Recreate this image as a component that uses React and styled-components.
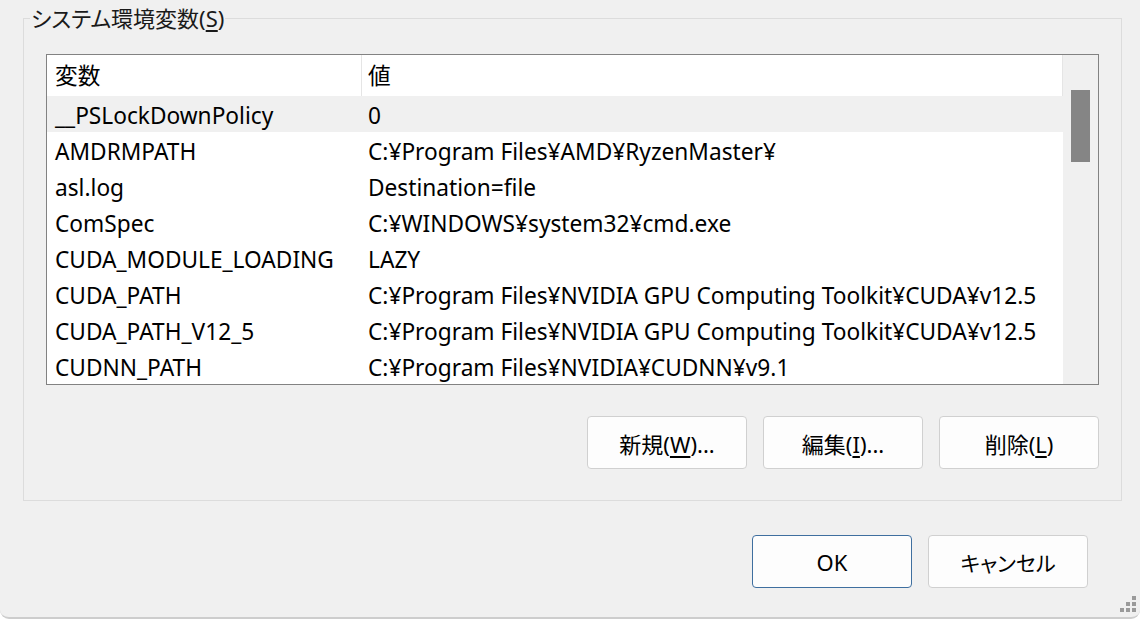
import React from 'react'
import styled, { createGlobalStyle } from 'styled-components'

const GlobalStyle = createGlobalStyle`
  html, body {
    margin: 0;
    padding: 0;
    background: #ffffff;
  }
  body {
    font-family: "Noto Sans", "Noto Sans CJK JP", sans-serif;
    color: #000;
  }
`

const variables = [
  { name: '__PSLockDownPolicy', value: '0', selected: true },
  { name: 'AMDRMPATH', value: 'C:¥Program Files¥AMD¥RyzenMaster¥' },
  { name: 'asl.log', value: 'Destination=file' },
  { name: 'ComSpec', value: 'C:¥WINDOWS¥system32¥cmd.exe' },
  { name: 'CUDA_MODULE_LOADING', value: 'LAZY' },
  { name: 'CUDA_PATH', value: 'C:¥Program Files¥NVIDIA GPU Computing Toolkit¥CUDA¥v12.5' },
  { name: 'CUDA_PATH_V12_5', value: 'C:¥Program Files¥NVIDIA GPU Computing Toolkit¥CUDA¥v12.5' },
  { name: 'CUDNN_PATH', value: 'C:¥Program Files¥NVIDIA¥CUDNN¥v9.1' },
]

const App = () => (
  <>
    <GlobalStyle />
    <Window>
      <Group>
        <Legend>システム環境変数(<U>S</U>)</Legend>
        <ListView>
          <ListBody>
            <HeaderRow>
              <HeaderCell>変数</HeaderCell>
              <HeaderCell>値</HeaderCell>
            </HeaderRow>
            {variables.map((v) => (
              <Row key={v.name} selected={v.selected}>
                <NameCell>{v.name}</NameCell>
                <ValueCell>{v.value}</ValueCell>
              </Row>
            ))}
          </ListBody>
          <ScrollTrack>
            <ScrollThumb />
          </ScrollTrack>
        </ListView>
        <ButtonRow>
          <Button>新規(<U>W</U>)...</Button>
          <Button>編集(<U>I</U>)...</Button>
          <Button>削除(<U>L</U>)</Button>
        </ButtonRow>
      </Group>
      <DialogButtons>
        <Button primary>OK</Button>
        <Button kana>キャンセル</Button>
      </DialogButtons>
      <Grip width="18" height="16" viewBox="0 0 18 16">
        <rect x="12" y="0" width="4" height="4" />
        <rect x="6" y="6" width="4" height="4" />
        <rect x="12" y="6" width="4" height="4" />
        <rect x="0" y="12" width="4" height="4" />
        <rect x="6" y="12" width="4" height="4" />
        <rect x="12" y="12" width="4" height="4" />
      </Grip>
    </Window>
  </>
)

export default App

const Window = styled.div`
  position: relative;
  box-sizing: border-box;
  width: 1140px;
  height: 619px;
  padding: 3px 18px 0 23px;
  background: #f0f0f0;
  border-bottom: 2px solid #cdcdcd;
  border-radius: 0 0 9px 9px;
  font-size: 22.7px;
`

const Group = styled.fieldset`
  margin: 0;
  padding: 21px 22px 31px 22px;
  border: 1px solid #dcdcdc;
  min-width: 0;
`

const Legend = styled.legend`
  margin-left: -16px;
  padding: 0 1px;
  line-height: 30px;
  font-size: 22px;
  font-feature-settings: "palt";
  color: #1a1a1a;
`

const U = styled.span`
  text-decoration: underline;
  text-underline-offset: 3px;
`

const ListView = styled.div`
  display: flex;
  height: 331px;
  box-sizing: border-box;
  border: 1px solid #828282;
  background: #ffffff;
  overflow: hidden;
`

const ListBody = styled.div`
  flex: 1;
  display: flex;
  flex-direction: column;
`

const HeaderRow = styled.div`
  display: grid;
  grid-template-columns: 314px 1fr;
  height: 41px;
  flex-shrink: 0;
  border-right: 1px solid #e5e5e5;
`

const HeaderCell = styled.div`
  display: flex;
  align-items: center;
  padding-left: 8px;
  padding-bottom: 2px;
  & + & {
    border-left: 1px solid #e5e5e5;
    padding-left: 6px;
  }
`

const Row = styled.div`
  display: grid;
  grid-template-columns: 314px 1fr;
  height: 36px;
  flex-shrink: 0;
  align-items: center;
  background: ${(p) => (p.selected ? '#f0f0f0' : 'transparent')};
  white-space: nowrap;
`

const NameCell = styled.div`
  padding-left: 8px;
  padding-top: 2px;
`

const ValueCell = styled.div`
  padding-left: 7px;
  padding-top: 2px;
`

const ScrollTrack = styled.div`
  width: 35px;
  flex-shrink: 0;
  background: #f0f0f0;
  padding: 35px 0 0 8px;
  box-sizing: border-box;
`

const ScrollThumb = styled.div`
  width: 19px;
  height: 72px;
  background: #858585;
`

const ButtonRow = styled.div`
  display: flex;
  justify-content: flex-end;
  gap: 16px;
  margin-top: 31px;
`

const Button = styled.button`
  width: 160px;
  height: 53px;
  box-sizing: border-box;
  border: 1px solid ${(p) => (p.primary ? '#3f6f9f' : '#d0d0d0')};
  border-radius: 4px;
  background: #fdfdfd;
  font-family: inherit;
  font-size: ${(p) => (p.kana ? '21px' : '22px')};
  font-feature-settings: ${(p) => (p.kana ? '"palt"' : 'normal')};
  color: #000;
  padding: 0;
`

const DialogButtons = styled.div`
  display: flex;
  justify-content: flex-end;
  gap: 16px;
  margin: 34px 34px 0 0;
`

const Grip = styled.svg`
  position: absolute;
  right: 2px;
  bottom: 5px;
  fill: #9a9a9a;
`
